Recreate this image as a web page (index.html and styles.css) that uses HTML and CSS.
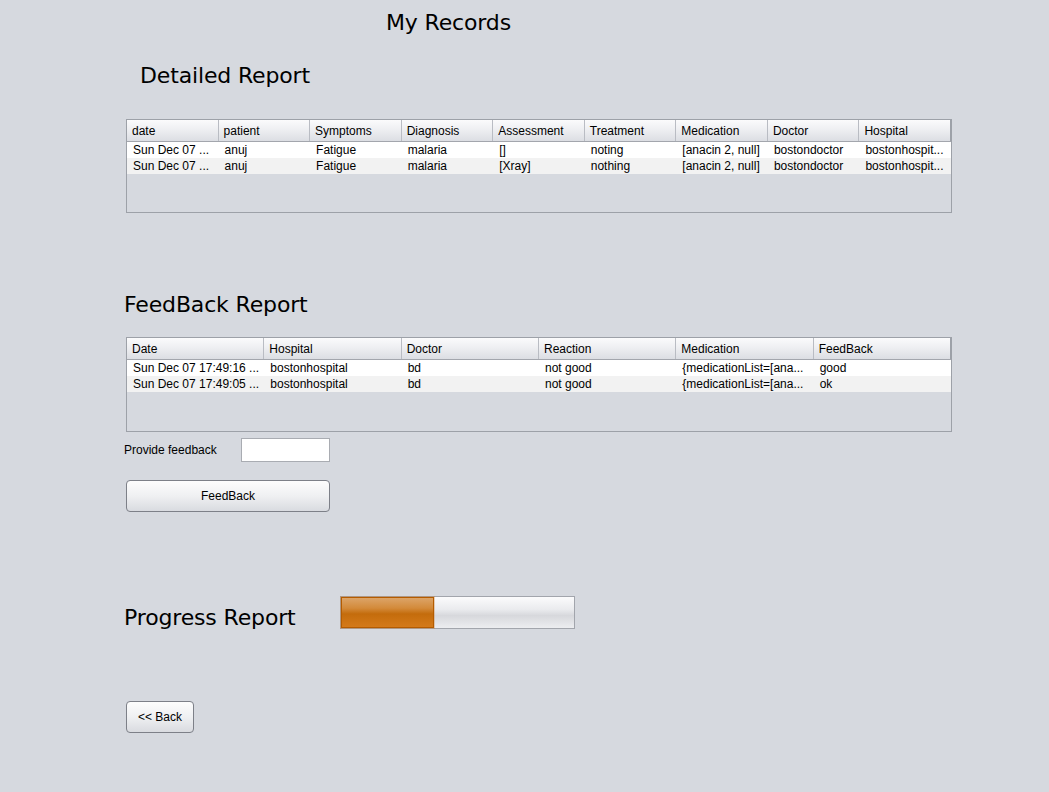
FILE: index.html
```html
<!DOCTYPE html>
<html>
<head>
<meta charset="utf-8">
<link rel="stylesheet" href="styles.css">
</head>
<body>
<div class="page">
  <h1 class="title">My Records</h1>
  <h2 class="heading heading-detailed">Detailed Report</h2>
  <div class="table table-detailed">
    <div class="thead cols9">
      <div class="th">date</div><div class="th">patient</div><div class="th">Symptoms</div><div class="th">Diagnosis</div><div class="th">Assessment</div><div class="th">Treatment</div><div class="th">Medication</div><div class="th">Doctor</div><div class="th">Hospital</div>
    </div>
    <div class="tr cols9">
      <div class="td">Sun Dec 07 ...</div><div class="td">anuj</div><div class="td">Fatigue</div><div class="td">malaria</div><div class="td">[]</div><div class="td">noting</div><div class="td">[anacin 2, null]</div><div class="td">bostondoctor</div><div class="td">bostonhospit...</div>
    </div>
    <div class="tr alt cols9">
      <div class="td">Sun Dec 07 ...</div><div class="td">anuj</div><div class="td">Fatigue</div><div class="td">malaria</div><div class="td">[Xray]</div><div class="td">nothing</div><div class="td">[anacin 2, null]</div><div class="td">bostondoctor</div><div class="td">bostonhospit...</div>
    </div>
  </div>

  <h2 class="heading heading-feedback">FeedBack Report</h2>
  <div class="table table-feedback">
    <div class="thead cols6">
      <div class="th">Date</div><div class="th">Hospital</div><div class="th">Doctor</div><div class="th">Reaction</div><div class="th">Medication</div><div class="th">FeedBack</div>
    </div>
    <div class="tr cols6">
      <div class="td">Sun Dec 07 17:49:16 ...</div><div class="td">bostonhospital</div><div class="td">bd</div><div class="td">not good</div><div class="td">{medicationList=[ana...</div><div class="td">good</div>
    </div>
    <div class="tr alt cols6">
      <div class="td">Sun Dec 07 17:49:05 ...</div><div class="td">bostonhospital</div><div class="td">bd</div><div class="td">not good</div><div class="td">{medicationList=[ana...</div><div class="td">ok</div>
    </div>
  </div>

  <div class="feedback-row">
    <label class="label">Provide feedback</label>
    <input class="input" type="text">
  </div>
  <button class="btn btn-feedback">FeedBack</button>

  <div class="progress-row">
    <h2 class="heading heading-progress">Progress Report</h2>
    <div class="progress"><div class="progress-fill" style="width:40%"></div></div>
  </div>

  <button class="btn btn-back">&lt;&lt; Back</button>
</div>
</body>
</html>
```

FILE: styles.css
```css
html, body {
  margin: 0;
  padding: 0;
  background: #d6d9df;
}
body {
  width: 1049px;
  height: 792px;
  overflow: hidden;
  font-family: "Liberation Sans", Arial, sans-serif;
  color: #000;
}
.page {
  padding: 0 0 0 124px;
  display: flex;
  flex-direction: column;
  align-items: flex-start;
}
.title, .heading {
  font-family: "DejaVu Sans", Verdana, sans-serif;
  font-weight: normal;
  font-size: 22px;
  letter-spacing: -0.15px;
  line-height: 28px;
  margin: 0;
}
.title {
  margin-top: 9px;
  margin-left: 262px;
}
.heading-detailed {
  margin-top: 25px;
  margin-left: 16px;
}
.table {
  margin-left: 2px;
  width: 824px;
  border: 1px solid #9da1a8;
  background: #d6d9df;
}
.table-detailed {
  margin-top: 29px;
  height: 92px;
}
.table-feedback {
  margin-top: 18px;
  height: 93px;
}
.cols9 {
  display: grid;
  grid-template-columns: repeat(9, 1fr);
}
.cols6 {
  display: grid;
  grid-template-columns: repeat(6, 1fr);
}
.thead {
  height: 21px;
  border-bottom: 1px solid #a3a6ad;
  background: linear-gradient(#fbfbfc 0%, #eeeff2 45%, #dcdee3 100%);
}
.th {
  font-size: 12px;
  line-height: 22px;
  height: 21px;
  padding-left: 5px;
  border-right: 1px solid #b9bcc3;
  white-space: nowrap;
  overflow: hidden;
}
.th:last-child {
  border-right: 1px solid #9da1a8;
}
.tr {
  height: 16px;
  background: #ffffff;
}
.tr.alt {
  background: #f2f2f2;
}
.td {
  font-size: 12px;
  line-height: 17px;
  height: 16px;
  padding-left: 6px;
  white-space: nowrap;
  overflow: hidden;
}
.heading-feedback {
  margin-top: 78px;
}
.feedback-row {
  margin-top: 6px;
  display: flex;
  align-items: center;
}
.label {
  font-size: 12px;
  width: 117px;
}
.input {
  box-sizing: border-box;
  width: 89px;
  height: 24px;
  margin: 0;
  border: 1px solid #a9acb2;
  background: #fff;
  padding: 0;
}
.btn {
  box-sizing: border-box;
  margin-left: 2px;
  border: 1px solid #7d8088;
  border-radius: 4px;
  background: linear-gradient(#fdfdfd 0%, #eff0f2 50%, #d9dbe0 100%);
  font-family: "Liberation Sans", Arial, sans-serif;
  font-size: 12px;
  color: #000;
  padding: 0;
}
.btn-feedback {
  margin-top: 18px;
  width: 204px;
  height: 32px;
}
.progress-row {
  margin-top: 80px;
  display: flex;
  align-items: center;
}
.heading-progress {
  width: 216px;
  margin-top: 12px;
}
.progress {
  box-sizing: border-box;
  width: 235px;
  height: 33px;
  border: 1px solid #a2a5ac;
  background: linear-gradient(#fbfbfc 0%, #eaebee 40%, #d7d8dc 60%, #ecedf0 100%);
}
.progress-fill {
  box-sizing: border-box;
  height: 100%;
  border: 1px solid #b55c00;
  background: linear-gradient(#dca468 0%, #d38a3a 35%, #c46c0c 55%, #d47a1a 100%);
  box-shadow: 0 0 0 1px rgba(200, 130, 60, 0.35);
}
.btn-back {
  margin-top: 69px;
  width: 68px;
  height: 32px;
}
```
